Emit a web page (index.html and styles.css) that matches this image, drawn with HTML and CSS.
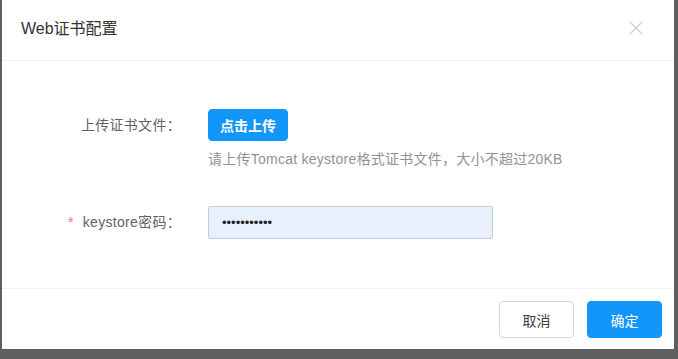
FILE: index.html
```html
<!DOCTYPE html>
<html lang="zh">
<head>
<meta charset="utf-8">
<title>Web证书配置</title>
<link rel="stylesheet" href="styles.css">
</head>
<body>
<div class="dialog">
  <div class="dialog-header">
    <span class="dialog-title">Web证书配置</span>
    <button class="dialog-close" aria-label="关闭">
      <svg width="14" height="14" viewBox="0 0 14 14"><path d="M1 1 L13 13 M13 1 L1 13" stroke="#c8cad0" stroke-width="1.3" fill="none"/></svg>
    </button>
  </div>
  <div class="dialog-body">
    <div class="form-row">
      <label class="form-label">上传证书文件：</label>
      <div class="form-control">
        <button class="btn btn-primary btn-upload">点击上传</button>
        <div class="hint">请上传Tomcat keystore格式证书文件，大小不超过20KB</div>
      </div>
    </div>
    <div class="form-row form-row-password">
      <label class="form-label"><span class="required">*</span>keystore密码：</label>
      <div class="form-control">
        <input class="input" type="password" value="12345678901">
      </div>
    </div>
  </div>
  <div class="dialog-footer">
    <button class="btn btn-default">取消</button>
    <button class="btn btn-primary">确定</button>
  </div>
</div>
</body>
</html>
```

FILE: styles.css
```css
html, body {
  margin: 0;
  padding: 0;
}
body {
  background: #5f5f5f;
  width: 678px;
  height: 359px;
  overflow: hidden;
  font-family: "Liberation Sans", "Noto Sans CJK SC", sans-serif;
}
.dialog {
  margin-left: 2px;
  width: 672px;
  height: 349px;
  background: #fff;
  display: flex;
  flex-direction: column;
}
.dialog-header {
  height: 61px;
  border-bottom: 1px solid #eff1f4;
  display: flex;
  align-items: center;
  justify-content: space-between;
  padding: 0 31px 0 19px;
  box-sizing: border-box;
  flex: none;
}
.dialog-title {
  font-size: 16px;
  color: #333;
  margin-top: -6px;
}
.dialog-close {
  border: 0;
  background: none;
  padding: 0;
  width: 14px;
  height: 14px;
  margin-top: -5px;
  display: flex;
}
.dialog-body {
  flex: 1;
  padding-top: 48px;
  box-sizing: border-box;
  border-bottom: 1px solid #eff1f4;
}
.form-row {
  display: flex;
  align-items: flex-start;
}
.form-row-password {
  margin-top: 37px;
}
.form-label {
  width: 179px;
  flex: none;
  text-align: right;
  font-size: 14px;
  color: #606266;
  line-height: 32px;
  letter-spacing: 0.3px;
}
.form-row-password .form-label {
  line-height: 33px;
}
.required {
  color: #f56c6c;
  margin-right: 9px;
}
.form-control {
  margin-left: 27px;
}
.btn {
  font-family: "Liberation Sans", "Noto Sans CJK SC", sans-serif;
  font-size: 14px;
  border-radius: 4px;
  box-sizing: border-box;
  cursor: pointer;
  padding: 0;
}
.btn-primary {
  background: #1296fa;
  border: 1px solid #1296fa;
  color: #fff;
}
.btn-default {
  background: #fff;
  border: 1px solid #d3d6dc;
  color: #3c3e42;
}
.btn-upload {
  width: 80px;
  height: 32px;
  font-weight: bold;
  display: block;
}
.hint {
  margin-top: 8px;
  font-size: 14px;
  line-height: 20px;
  color: #8e939b;
  letter-spacing: 0.25px;
}
.input {
  width: 285px;
  height: 33px;
  box-sizing: border-box;
  background: #e8f0fe;
  border: 1px solid #c8ccd3;
  border-radius: 2px;
  padding: 0 13px;
  font-family: "Liberation Sans", sans-serif;
  font-size: 13px;
  color: #222;
  outline: none;
  display: block;
}
.dialog-footer {
  flex: none;
  height: 60px;
  padding: 12px 12px 0 0;
  box-sizing: border-box;
  display: flex;
  justify-content: flex-end;
  align-items: flex-start;
  gap: 13px;
}
.dialog-footer .btn {
  width: 75px;
  height: 37px;
}
```
